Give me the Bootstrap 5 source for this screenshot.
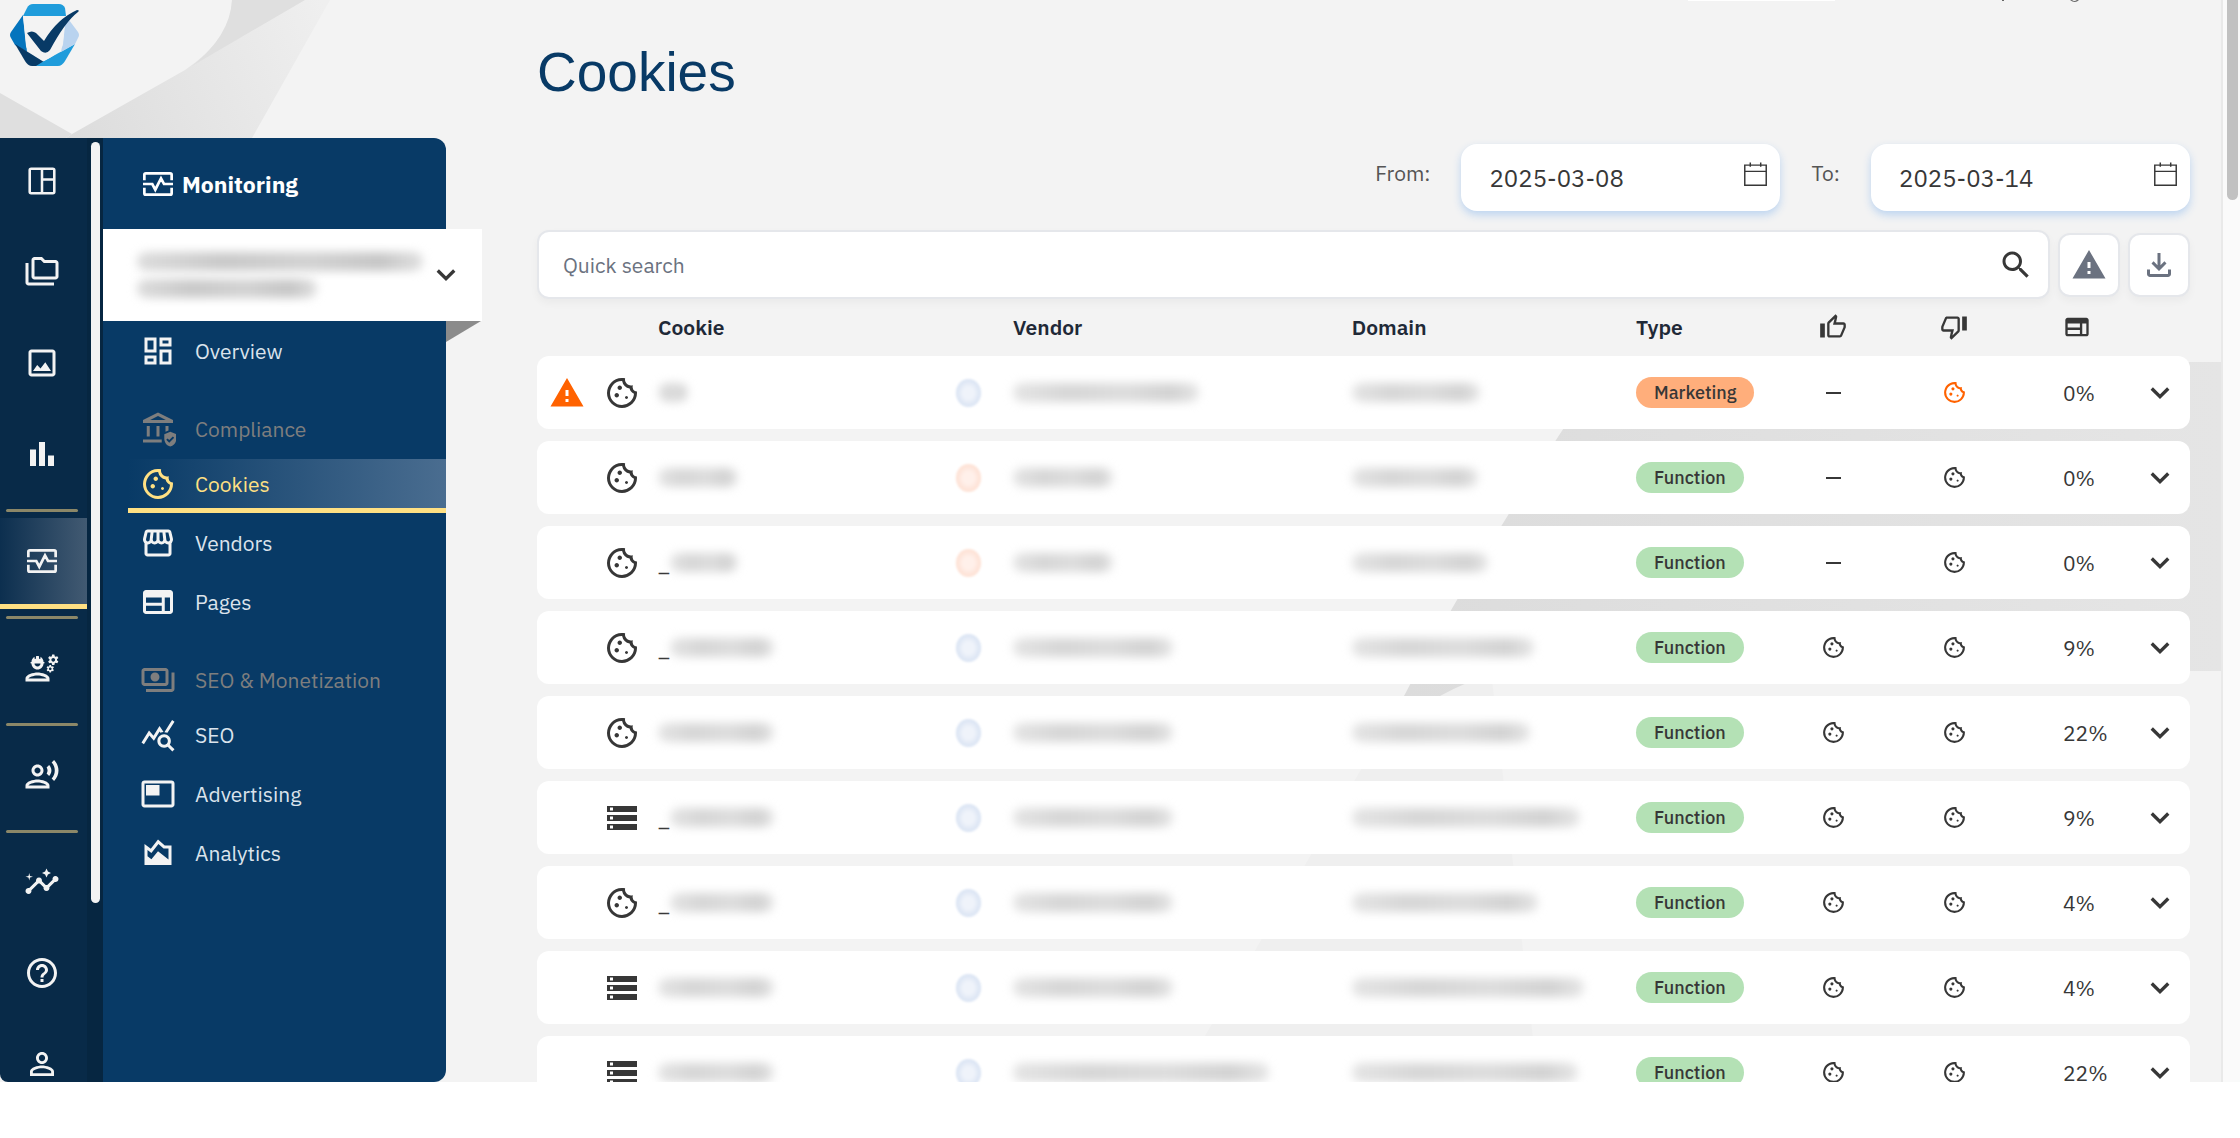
<!DOCTYPE html>
<html lang="en">
<head>
<meta charset="utf-8">
<meta name="viewport" content="width=device-width, initial-scale=1">
<title>Cookies – Monitoring</title>
<link href="https://cdn.jsdelivr.net/npm/bootstrap@5.3.0/dist/css/bootstrap.min.css" rel="stylesheet">
<style>
  :root { --navy:#083a66; --deep:#082a48; --gold:#ffe083; --ink:#373737; --page:#f3f3f3; }
  body { font-family:"IBM Plex Sans","Noto Sans",sans-serif; font-size:21px; line-height:28px; color:var(--ink); background:#fff; }
  svg { display:block; flex:none; fill:currentColor; }
  .i36 { width:36px; height:36px; } .i28 { width:28px; height:28px; } .i25 { width:25px; height:25px; }
  .app { height:calc(100vh - 56px); background:var(--page); overflow:hidden; }
  .backdrop { position:absolute; inset:0; width:100%; height:100%; }
  .side { width:446px; flex:none; }
  .brand { height:138px; padding:3px 8px; flex:none; }
  .side-body { min-height:0; }
  .rail { width:87px; flex:none; background:var(--deep); color:#f3f3f3; border-bottom-left-radius:8px; overflow:hidden; }
  .rail a { height:91px; padding-right:4px; color:inherit; border-bottom:5px solid transparent; flex:none; }
  .rail a.on { background:linear-gradient(90deg,#0c2f4f,#425a72); border-color:var(--gold); }
  .rail hr { margin:7px 9px 6px 6px; border:0; height:3px; background:#8b8768; opacity:1; border-radius:2px; flex:none; }
  .track { width:16px; background:#062641; padding:4px 3px 0 4px; flex:none; }
  .track div { height:81%; background:#f3f3f3; border-radius:5px; }
  .panel { min-width:0; background:var(--navy); color:#dbe3ec; border-radius:0 12px 12px 0; }
  .panel-title { height:91px; padding-left:37px; gap:6px; color:#fff; font-weight:700; font-size:23px; }
  .site-pick { width:379px; height:92px; background:#fff; border:0; padding:0 18px 0 34px; color:var(--ink); }
  .site-pick .smudge { background:linear-gradient(90deg,#dcdcdc,#c9c9c9 30%,#d2d2d2 60%,#c6c6c6 85%,#e0e0e0); }
  .fold { position:absolute; left:343px; top:100%; width:35px; height:21px; background:#8b8b8b; clip-path:polygon(0 0,100% 0,0 100%); }
  .menu { padding:5px 0 0 25px; }
  .menu a, .menu .sect { gap:19px; padding-left:12px; }
  .menu a { height:54px; margin-bottom:5px; border-bottom:5px solid transparent; color:inherit; text-decoration:none; }
  .menu a svg { color:#f3f3f3; }
  .menu a.on { color:var(--gold); border-color:var(--gold); background:linear-gradient(90deg,var(--navy),#4a6d90); }
  .menu a.on svg { color:var(--gold); }
  .menu .sect { height:74px; padding-top:14px; color:#7e7e7e; }
  .main { padding:40px 31px 0 91px; }
  h1 { font:400 55px/64px "Liberation Sans",Arial,sans-serif; color:var(--navy); margin:0 0 40px; }
  .dates { gap:31px; margin-bottom:19px; }
  .dates label { padding-bottom:9px; color:#555; }
  .date-box { width:319px; height:67px; background:#fff; border-radius:16px; box-shadow:0 4px 8px #bcd4f0; padding:0 12px 0 28px; }
  .date-box input { border:0; outline:0; background:none; min-width:0; flex:1; color:var(--ink); font-size:24px; padding:0; }
  .date-box svg { fill:none; stroke:currentColor; margin-bottom:6px; }
  .find { gap:8px; }
  .find-box { height:69px; background:#fff; border:2px solid #e5e7eb; border-radius:12px; box-shadow:0 4px 8px #0000000a; padding:0 14px 0 24px; }
  .find-box input { border:0; outline:0; flex:1; padding:0; }
  .find-box input::placeholder { color:#6b7280; opacity:1; }
  .plain { border:0; background:none; padding:0; color:inherit; }
  .tool { width:62px; height:64px; background:#fff; border:2px solid #e5e7eb; border-radius:12px; color:#6b7280; padding:0; box-shadow:0 4px 8px #0000000a; }
  .grid { width:100%; table-layout:fixed; border-collapse:separate; border-spacing:0 12px; margin-top:-1px; }
  .grid th { height:34px; padding:0 0 0 12px; font-weight:600; color:#1f2937; }
  .grid th svg { color:#373737; }
  .grid td { height:73px; padding:0 0 0 12px; background:#fff; }
  .grid .mid { padding:0; text-align:center; }
  .grid .mid svg { margin:0 auto; }
  .grid .mid .plain { display:block; margin:0 auto; }
  .grid .pct { padding-left:48px; }
  .grid th.pct svg { margin-left:0; }
  .grid td:first-child { border-radius:12px 0 0 12px; } .grid td:last-child { border-radius:0 12px 12px 0; }
  .alert-mark { color:#ff6200; }
  .dash { display:block; width:15px; height:2px; margin:0 auto; background:var(--ink); }
  .kind { display:block; width:max-content; height:31px; line-height:31px; border-radius:16px; padding:0 18px; font-size:18px; font-weight:500; background:#b4e1b5; }
  .kind.mk { background:#ffae7b; }
  .smudge { display:block; height:19px; border-radius:9px; background:linear-gradient(90deg,#e4e4e4,#d6d6d6 30%,#dddddd 60%,#d2d2d2 85%,#e6e6e6); filter:blur(5px); }
  .uline { width:12px; }
  .vlogo { width:25px; height:28px; border-radius:50%; margin:0 auto; filter:blur(1px); background:radial-gradient(#eff3fa 30%,#d3dff1 80%); }
  .vlogo.peach { background:radial-gradient(#fff0ea 30%,#fddccd 80%); }
  .scroll { width:19px; flex:none; background:#fafafa; border-left:2px solid #e9e9e9; padding-left:4px; }
  .scroll div { width:11px; height:200px; background:#c1c1c1; border-radius:0 0 6px 6px; }
</style>
</head>
<body>
<svg width="0" height="0" class="position-absolute" aria-hidden="true">
  <symbol id="cookie" viewBox="0 -960 960 960"><path d="M480-80q-83 0-156-31.500T197-197q-54-54-85.500-127T80-480q0-75 29-147t81-128.500q52-56.500 125-91T475-881q21 0 43 2t45 7q-9 45 6 85t45 66.500q30 26.500 71.500 36.500t85.500-5q-26 59 7.500 113t99.500 56q1 11 1.500 20.500t.5 20.500q0 82-31.500 154.500t-85.500 127q-54 54.500-127 86T480-80Zm-60-480q25 0 42.500-17.500T480-620q0-25-17.500-42.500T420-680q-25 0-42.500 17.500T360-620q0 25 17.500 42.500T420-560Zm-80 200q25 0 42.500-17.500T400-420q0-25-17.500-42.500T340-480q-25 0-42.500 17.500T280-420q0 25 17.500 42.500T340-360Zm260 40q17 0 28.500-11.500T640-360q0-17-11.500-28.500T600-400q-17 0-28.500 11.500T560-360q0 17 11.500 28.500T600-320ZM480-160q122 0 216.500-84T800-458q-50-22-78.500-60T683-603q-77-11-132-66t-68-132q-80-2-140.500 29t-101 79.500Q201-644 180.500-587T160-480q0 133 93.500 226.500T480-160Z"/></symbol>
  <symbol id="board" viewBox="0 0 24 24"><g fill="none" stroke="currentColor" stroke-width="1.700"><rect x="3.800" y="3.800" width="16.400" height="16.400" rx="1"/><path d="M12 4v16M12 11h8"/></g></symbol>
  <symbol id="folders" viewBox="0 0 24 24"><path d="M3 6H1v13c0 1.100.9 2 2 2h17v-2H3V6zM21 4h-7l-2-2H7c-1.100 0-1.990.9-1.990 2L5 15c0 1.100.9 2 2 2h14c1.100 0 2-.9 2-2V6c0-1.100-.9-2-2-2zm0 11H7V4h4.170l2 2H21v9z"/></symbol>
  <symbol id="image" viewBox="0 0 24 24"><path d="M19 5v14H5V5h14m0-2H5c-1.100 0-2 .9-2 2v14c0 1.100.9 2 2 2h14c1.100 0 2-.9 2-2V5c0-1.100-.9-2-2-2zM6 17.300l2.800-4 2.200 2.400 3.200-4.200 3.800 5.800z"/></symbol>
  <symbol id="bars" viewBox="0 0 24 24"><path d="M4 9h4v11H4zM16 13h4v7h-4zM10 4h4v16h-4z"/></symbol>
  <symbol id="pulse" viewBox="0 0 24 24"><path fill="none" stroke="currentColor" stroke-width="1.800" d="M2.900 9.500V5.900q0-1 1-1h16.200q1 0 1 1v3.600M2.900 14.500v3.600q0 1 1 1h16.200q1 0 1-1v-3.600M2 12h6.200l2 3.800 3.800-7.500 2 3.700h6"/></symbol>
  <symbol id="crew" viewBox="0 0 24 24"><path d="M9 15c-2.670 0-8 1.340-8 4v2h16v-2c0-2.660-5.330-4-8-4zm-6 4c.22-.72 3.310-2 6-2 2.700 0 5.800 1.290 6 2H3zM4.740 9H5c0 2.210 1.790 4 4 4s4-1.790 4-4h.26c.27 0 .49-.22.49-.49v-.02c0-.27-.22-.49-.49-.49H13c0-1.480-.81-2.750-2-3.450v.95c0 .28-.22.5-.5.5s-.5-.22-.5-.5V4.140C9.680 4.060 9.350 4 9 4s-.68.06-1 .14V5.500c0 .28-.22.5-.5.5S7 5.780 7 5.500v-.95C5.810 5.250 5 6.520 5 8h-.26c-.27 0-.49.22-.49.49v.03c0 .26.22.48.49.48zM11 9c0 1.100-.9 2-2 2s-2-.9-2-2h4zM21.980 6.230l.93-.83-.75-1.300-1.190.39c-.14-.11-.3-.2-.47-.27L20.250 3h-1.500l-.25 1.220c-.17.07-.33.16-.48.27l-1.180-.39-.75 1.300.93.83c-.02.17-.02.35 0 .52l-.93.85.75 1.300 1.200-.38c.13.1.28.18.43.25l.28 1.230h1.500l.27-1.220c.16-.07.3-.15.44-.25l1.190.38.75-1.300-.93-.85c.03-.19.02-.36.01-.53zM19.500 7.750c-.69 0-1.250-.56-1.250-1.250s.56-1.250 1.250-1.250 1.250.56 1.250 1.250-.56 1.250-1.250 1.250zM19.400 10.790l-.85.28c-.1-.08-.21-.14-.33-.19l-.18-.88h-1.070l-.18.87c-.12.05-.24.12-.34.19l-.84-.28-.54.93.66.59c-.01.13-.01.25 0 .37l-.66.61.54.93.86-.27c.1.07.2.13.31.18l.18.88h1.070l.19-.87c.11-.05.22-.11.32-.18l.85.27.54-.93-.66-.61c.01-.13.01-.25 0-.37l.66-.59-.53-.93zm-1.900 2.600c-.49 0-.89-.4-.89-.89s.4-.89.89-.89.89.4.89.89-.4.89-.89.89z"/></symbol>
  <symbol id="voice" viewBox="0 0 24 24"><path d="M9 13c2.210 0 4-1.790 4-4s-1.790-4-4-4-4 1.790-4 4 1.790 4 4 4zm0-6c1.100 0 2 .9 2 2s-.9 2-2 2-2-.9-2-2 .9-2 2-2zM9 15c-2.670 0-8 1.340-8 4v2h16v-2c0-2.660-5.330-4-8-4zm-6 4c.22-.72 3.310-2 6-2 2.700 0 5.800 1.290 6 2H3zM15.080 7.050c.84 1.180.84 2.710 0 3.890l1.680 1.690c2.020-2.020 2.020-5.070 0-7.270l-1.680 1.690zM20.070 2l-1.630 1.630c2.770 3.020 2.770 7.560 0 10.740L20.070 16c3.900-3.890 3.910-9.950 0-14z"/></symbol>
  <symbol id="insights" viewBox="0 0 24 24"><path d="M21 8c-1.450 0-2.260 1.440-1.930 2.510l-3.550 3.560c-.3-.09-.74-.09-1.040 0l-2.550-2.550C12.270 10.450 11.460 9 10 9c-1.450 0-2.270 1.440-1.930 2.520l-4.560 4.550C2.440 15.740 1 16.550 1 18c0 1.100.9 2 2 2 1.450 0 2.260-1.440 1.930-2.510l4.550-4.560c.3.09.74.09 1.040 0l2.550 2.550C12.730 16.550 13.540 18 15 18c1.450 0 2.270-1.440 1.930-2.520l3.560-3.550c1.070.33 2.510-.48 2.510-1.930 0-1.100-.9-2-2-2zM15 9l.94-2.070L18 6l-2.060-.93L15 3l-.92 2.070L12 6l2.080.93zM3.500 11L4 9l2-.5L4 8l-.5-2L3 8l-2 .5L3 9z"/></symbol>
  <symbol id="help" viewBox="0 0 24 24"><path d="M11 18h2v-2h-2v2zm1-16C6.480 2 2 6.480 2 12s4.480 10 10 10 10-4.480 10-10S17.520 2 12 2zm0 18c-4.410 0-8-3.590-8-8s3.590-8 8-8 8 3.590 8 8-3.590 8-8 8zm0-14c-2.210 0-4 1.790-4 4h2c0-1.100.9-2 2-2s2 .9 2 2c0 2-3 1.750-3 5h2c0-2.250 3-2.500 3-5 0-2.210-1.790-4-4-4z"/></symbol>
  <symbol id="person" viewBox="0 0 24 24"><path d="M12 5.900c1.160 0 2.100.94 2.100 2.100s-.94 2.100-2.100 2.100S9.900 9.160 9.900 8s.94-2.100 2.100-2.100m0 9c2.970 0 6.100 1.460 6.100 2.100v1.100H5.900V17c0-.64 3.130-2.100 6.100-2.100M12 4C9.790 4 8 5.790 8 8s1.790 4 4 4 4-1.790 4-4-1.790-4-4-4zm0 9c-2.670 0-8 1.340-8 4v3h16v-3c0-2.660-5.330-4-8-4z"/></symbol>
  <symbol id="tiles" viewBox="0 0 24 24"><path d="M19 5v2h-4V5h4M9 5v6H5V5h4m10 8v6h-4v-6h4M9 17v2H5v-2h4M21 3h-8v6h8V3zM11 3H3v10h8V3zm10 8h-8v10h8V11zm-10 4H3v6h8v-6z"/></symbol>
  <symbol id="court" viewBox="0 0 24 24" overflow="visible"><path fill-rule="evenodd" d="M12 1L2 6v2h20V6L12 1zM6.800 6L12 3.400 17.200 6H6.800zM4.500 10h2v7h-2zM11 10h2v7h-2zM17 10h2v3l-2 .8zM2 19h12.500v2H2zM20.200 13.800l-4 1.700v3c0 2.400 1.600 4.600 4 5.200 2.400-.6 4-2.800 4-5.200v-3l-4-1.700zm-.7 7.400l-2-2 .9-.9 1.100 1.100 2.400-2.400.9.900-3.300 3.300z"/></symbol>
  <symbol id="shop" viewBox="0 0 24 24"><path d="M21.900 8.890l-1.050-4.370c-.22-.9-1-1.520-1.910-1.520H5.050c-.9 0-1.690.63-1.900 1.520L2.100 8.890c-.24 1.020-.02 2.060.62 2.880.08.11.19.19.28.29V19c0 1.100.9 2 2 2h14c1.100 0 2-.9 2-2v-6.940c.09-.09.2-.18.28-.28.64-.82.87-1.870.62-2.890zm-2.990-3.900l1.050 4.370c.1.42.01.84-.25 1.170-.14.18-.44.47-.94.47-.61 0-1.140-.49-1.210-1.140L16.980 5l1.930-.01zM13 5h1.960l.54 4.520c.05.39-.07.78-.33 1.070-.22.26-.54.41-.95.41-.67 0-1.220-.59-1.220-1.310V5zM8.490 9.520L9.040 5H11v4.690c0 .72-.55 1.310-1.290 1.310-.34 0-.65-.15-.89-.41-.25-.29-.37-.68-.33-1.070zm-4.450-.16L5.050 5h1.970l-.58 4.860c-.08.65-.6 1.140-1.210 1.140-.49 0-.8-.29-.93-.47-.27-.32-.36-.75-.26-1.170zM5 19v-6.030c.08.01.15.03.23.03.87 0 1.660-.36 2.240-.95.6.6 1.400.95 2.310.95.87 0 1.650-.36 2.230-.93.59.57 1.390.93 2.290.93.84 0 1.640-.35 2.240-.95.58.59 1.370.95 2.240.95.08 0 .15-.02.23-.03V19H5z"/></symbol>
  <symbol id="web" viewBox="0 0 24 24"><path fill-rule="evenodd" d="M20 4H4c-1.100 0-2 .9-2 2v12c0 1.100.9 2 2 2h16c1.100 0 2-.9 2-2V6c0-1.100-.9-2-2-2zM4 9h10.500v3.500H4zM4 14.500h10.500V18H4zM16.500 9H20v9h-3.500z"/></symbol>
  <symbol id="cash" viewBox="0 0 24 24"><path d="M19 14V6c0-1.100-.9-2-2-2H3c-1.100 0-2 .9-2 2v8c0 1.100.9 2 2 2h14c1.100 0 2-.9 2-2zm-2 0H3V6h14v8zm-7-7c-1.660 0-3 1.340-3 3s1.340 3 3 3 3-1.340 3-3-1.340-3-3-3zm13 0v11c0 1.100-.9 2-2 2H4v-2h17V7h2z"/></symbol>
  <symbol id="stats" viewBox="0 0 24 24"><path d="M19.880 18.470c.44-.7.7-1.510.7-2.390 0-2.490-2.010-4.500-4.500-4.500s-4.500 2.010-4.500 4.500 2.010 4.500 4.490 4.500c.88 0 1.700-.26 2.390-.7L21.580 23 23 21.580l-3.120-3.110zm-3.800.11c-1.380 0-2.500-1.120-2.500-2.500s1.120-2.500 2.500-2.500 2.500 1.120 2.500 2.500-1.120 2.500-2.500 2.500zM15.720 10.080c-.74.02-1.450.18-2.100.45l-.55-.83-3.800 6.180-3.010-3.520-3.630 5.810L1 17l5-8 3 3.500L13 6l2.720 4.080zM18.310 10.580c-.64-.28-1.330-.45-2.050-.49L21.380 2 23 3.180l-4.690 7.400z"/></symbol>
  <symbol id="advert" viewBox="0 0 24 24"><path d="M21 3H3c-1.110 0-2 .89-2 2v14c0 1.110.89 2 2 2h18c1.110 0 2-.89 2-2V5c0-1.110-.89-2-2-2zm0 16H3V5h18v14zM4 6h9v7H4z"/></symbol>
  <symbol id="area" viewBox="0 0 24 24"><path fill-rule="evenodd" d="M3 6l4.200 3.200L12 3l4.500 4H21v13H3zM5 10v4.200l2.600 2L12 10.800l7 5.500V9h-3.300L12.300 6 7.600 12z"/></symbol>
  <symbol id="warn" viewBox="0 0 24 24"><path d="M1 21h22L12 2 1 21zm12-3h-2v-2h2v2zm0-4h-2v-4h2v4z"/></symbol>
  <symbol id="search" viewBox="0 0 24 24"><path d="M15.500 14h-.79l-.28-.27C15.410 12.590 16 11.110 16 9.500 16 5.910 13.090 3 9.500 3S3 5.910 3 9.500 5.910 16 9.500 16c1.610 0 3.090-.59 4.230-1.570l.27.28v.79l5 4.990L20.490 19l-4.990-5zm-6 0C7.010 14 5 11.990 5 9.500S7.010 5 9.500 5 14 7.010 14 9.500 11.990 14 9.500 14z"/></symbol>
  <symbol id="download" viewBox="0 -960 960 960"><path d="M480-320 280-520l56-58 104 104v-326h80v326l104-104 56 58-200 200ZM240-160q-33 0-56.500-23.500T160-240v-120h80v120h480v-120h80v120q0 33-23.500 56.500T720-160H240Z"/></symbol>
  <symbol id="up" viewBox="0 0 24 24"><path d="M9 21h9c.83 0 1.540-.5 1.840-1.220l3.020-7.050c.09-.23.14-.47.14-.73v-2c0-1.100-.9-2-2-2h-6.310l.95-4.570.03-.32c0-.41-.17-.79-.44-1.060L14.170 1 7.580 7.590C7.220 7.950 7 8.450 7 9v10c0 1.100.9 2 2 2zM9 9l4.340-4.340L12 10h9v2l-3 7H9V9zM1 9h4v12H1V9z"/></symbol>
  <symbol id="down" viewBox="0 0 24 24"><path transform="rotate(180 12 12)" d="M9 21h9c.83 0 1.540-.5 1.840-1.220l3.020-7.050c.09-.23.14-.47.14-.73v-2c0-1.100-.9-2-2-2h-6.310l.95-4.570.03-.32c0-.41-.17-.79-.44-1.060L14.170 1 7.580 7.590C7.220 7.950 7 8.450 7 9v10c0 1.100.9 2 2 2zM9 9l4.340-4.340L12 10h9v2l-3 7H9V9zM1 9h4v12H1V9z"/></symbol>
  <symbol id="store" viewBox="0 0 24 24"><path d="M2 20h20v-4H2v4zm2-3h2v2H4v-2zM2 4v4h20V4H2zm4 3H4V5h2v2zm-4 7h20v-4H2v4zm2-3h2v2H4v-2z"/></symbol>
  <symbol id="chev" viewBox="0 0 24 24"><path fill="none" stroke="currentColor" stroke-width="2.200" d="M6.500 9l5.500 5.500L17.500 9"/></symbol>
  <symbol id="cal" viewBox="0 0 24 24"><path fill="none" stroke="currentColor" stroke-width="1.400" d="M1.700 3h20.600v19.300H1.700zM1.700 9h20.600M7 .5V4.500M17 .5V4.500"/></symbol>
</svg>

<div class="app position-relative d-flex">
  <svg class="backdrop" viewBox="0 0 2240 1082" preserveAspectRatio="none" aria-hidden="true">
    <defs><linearGradient id="g1" x1="70" y1="138" x2="330" y2="20" gradientUnits="userSpaceOnUse"><stop offset="0" stop-color="#dcdcdc"/><stop offset="1" stop-color="#efefef"/></linearGradient>
    <linearGradient id="g2"><stop offset="0" stop-color="#dcdcdc"/><stop offset="1" stop-color="#e5e5e5"/></linearGradient></defs>
    <path fill="url(#g1)" d="M72 134L185 70Q232 38 232 0H330L252 138H66z"/>
    <path fill="#dfdfdf" d="M0 93L72 134L66 138H0zM232 0H305L192 66Q230 36 232 0z"/>
    <path fill="#efefef" d="M1404 696L1491 671L1538 1082H1178z"/>
    <path fill="url(#g2)" d="M1608 362H2221V671H1500Q1465 682 1440 696H1404Q1480 550 1608 362z"/>
    <path fill="#fff" d="M1688 0h147v1h-147z"/>
    <path fill="#666" d="M2002 0h2v1h-2zM2070 0h2q2 2 5 0h2q-4 4-9 0z"/>
  </svg>

  <aside class="side position-relative d-flex flex-column">
    <a class="brand" href="#" aria-label="Home">
      <svg width="72" height="65" viewBox="7 3 72 65">
        <path fill="#1f9cdb" d="M22 16L26 8Q28 4 32 4H58Q62 4 64 8L65 16z"/>
        <path fill="#0474bd" d="M22 15L10 32Q8 35 10 38L14 45L26 52L22 16z"/>
        <path fill="#083a66" d="M14 44L24 61Q27 66 31 66H36L43 62z"/>
        <path fill="#1f9cdb" d="M74 44L64 61Q61 66 57 66H35L43 61z"/>
        <path fill="#b9d3ef" d="M65 16L77 32Q79 35 77 38L74 44L60 52Q64 32 63 20z"/>
        <path fill="#f3f3f3" d="M22 16H65L62 44Q61 52 43 61Q26 52 25 46z"/>
        <path fill="#083a66" d="M26 33Q31 30 35 33L43 41Q56 19 76 10Q79 10 77 12Q64 22 49 50Q45 55 40 51Q29 37 26 33z"/>
      </svg>
    </a>
    <div class="side-body d-flex flex-grow-1">
      <nav class="rail d-flex flex-column" aria-label="Main">
        <a href="#" aria-label="Dashboard" class="d-flex align-items-center justify-content-center"><svg class="i36"><use href="#board"/></svg></a>
        <a href="#" aria-label="Projects" class="d-flex align-items-center justify-content-center"><svg class="i36"><use href="#folders"/></svg></a>
        <a href="#" aria-label="Designs" class="d-flex align-items-center justify-content-center"><svg class="i36"><use href="#image"/></svg></a>
        <a href="#" aria-label="Reports" class="d-flex align-items-center justify-content-center"><svg class="i36"><use href="#bars"/></svg></a>
        <hr>
        <a href="#" aria-label="Monitoring" class="on d-flex align-items-center justify-content-center"><svg class="i36"><use href="#pulse"/></svg></a>
        <hr>
        <a href="#" aria-label="Services" class="d-flex align-items-center justify-content-center"><svg class="i36"><use href="#crew"/></svg></a>
        <hr>
        <a href="#" aria-label="Requests" class="d-flex align-items-center justify-content-center"><svg class="i36"><use href="#voice"/></svg></a>
        <hr>
        <a href="#" aria-label="Insights" class="d-flex align-items-center justify-content-center"><svg class="i36"><use href="#insights"/></svg></a>
        <a href="#" aria-label="Help" class="d-flex align-items-center justify-content-center"><svg class="i36"><use href="#help"/></svg></a>
        <a href="#" aria-label="Account" class="d-flex align-items-center justify-content-center"><svg class="i36"><use href="#person"/></svg></a>
      </nav>
      <div class="track"><div></div></div>
      <div class="panel flex-grow-1 d-flex flex-column">
        <div class="panel-title d-flex align-items-center"><svg class="i36"><use href="#pulse"/></svg>Monitoring</div>
        <div class="position-relative">
          <button type="button" class="site-pick d-flex align-items-center justify-content-between" aria-label="Select site">
            <span class="d-flex flex-column gap-2"><span class="smudge" style="width:286px"></span><span class="smudge" style="width:180px"></span></span>
            <svg class="i36"><use href="#chev"/></svg>
          </button>
          <div class="fold"></div>
        </div>
        <nav class="menu" aria-label="Monitoring">
          <a href="#" class="d-flex align-items-center"><svg class="i36"><use href="#tiles"/></svg>Overview</a>
          <div class="sect d-flex align-items-center"><svg class="i36"><use href="#court"/></svg>Compliance</div>
          <a href="#" class="on d-flex align-items-center"><svg class="i36"><use href="#cookie"/></svg>Cookies</a>
          <a href="#" class="d-flex align-items-center"><svg class="i36"><use href="#shop"/></svg>Vendors</a>
          <a href="#" class="d-flex align-items-center"><svg class="i36"><use href="#web"/></svg>Pages</a>
          <div class="sect d-flex align-items-center"><svg class="i36"><use href="#cash"/></svg>SEO &amp; Monetization</div>
          <a href="#" class="d-flex align-items-center"><svg class="i36"><use href="#stats"/></svg>SEO</a>
          <a href="#" class="d-flex align-items-center"><svg class="i36"><use href="#advert"/></svg>Advertising</a>
          <a href="#" class="d-flex align-items-center"><svg class="i36"><use href="#area"/></svg>Analytics</a>
        </nav>
      </div>
    </div>
  </aside>

  <main class="main position-relative flex-grow-1">
    <h1>Cookies</h1>
    <div class="dates d-flex align-items-center justify-content-end">
      <label for="from">From:</label>
      <div class="date-box d-flex align-items-center"><input id="from" type="text" value="2025-03-08"><svg class="i25"><use href="#cal"/></svg></div>
      <label for="to">To:</label>
      <div class="date-box d-flex align-items-center"><input id="to" type="text" value="2025-03-14"><svg class="i25"><use href="#cal"/></svg></div>
    </div>
    <div class="find d-flex align-items-center">
      <div class="find-box d-flex align-items-center flex-grow-1"><input type="search" placeholder="Quick search" aria-label="Quick search"><button type="button" class="plain" aria-label="Search"><svg class="i36"><use href="#search"/></svg></button></div>
      <button type="button" class="tool d-flex align-items-center justify-content-center" aria-label="Show warnings"><svg class="i36"><use href="#warn"/></svg></button>
      <button type="button" class="tool d-flex align-items-center justify-content-center" aria-label="Download"><svg class="i36"><use href="#download"/></svg></button>
    </div>
    <table class="grid">
      <colgroup><col style="width:60px"><col style="width:49px"><col style="width:17.6%"><col style="width:64px"><col><col style="width:17.2%"><col style="width:149px"><col style="width:120px"><col style="width:122px"><col style="width:114px"><col style="width:61px"></colgroup>
      <thead><tr><th></th><th></th><th>Cookie</th><th></th><th>Vendor</th><th>Domain</th><th>Type</th>
        <th class="mid"><svg class="i28"><use href="#up"/></svg></th><th class="mid"><svg class="i28"><use href="#down"/></svg></th><th class="pct"><svg class="i28"><use href="#web"/></svg></th><th></th></tr></thead>
      <tbody id="rows"></tbody>
    </table>
  </main>
  <div class="scroll position-relative"><div></div></div>
</div>

<script src="https://cdn.jsdelivr.net/npm/bootstrap@5.3.0/dist/js/bootstrap.bundle.min.js"></script>
<script>
  // icon, underscore shown, widths of the hidden name / vendor / domain, logo tint, type, set on accept, share of pages
  const rows = [
    ['cookie', 0,  30, 186, 128, '',      'Marketing', 0, '0%'],
    ['cookie', 0,  80, 100, 126, 'peach', 'Function',  0, '0%'],
    ['cookie', 1,  68, 100, 136, 'peach', 'Function',  0, '0%'],
    ['cookie', 1, 104, 160, 182, '',      'Function',  1, '9%'],
    ['cookie', 0, 116, 160, 178, '',      'Function',  1, '22%'],
    ['store',  1, 104, 160, 228, '',      'Function',  1, '9%'],
    ['cookie', 1, 104, 160, 186, '',      'Function',  1, '4%'],
    ['store',  0, 116, 160, 232, '',      'Function',  1, '4%'],
    ['store',  0, 116, 256, 226, '',      'Function',  1, '22%']
  ];
  const icon = (id, size, more = '') => `<svg class="${size} ${more}"><use href="#${id}"/></svg>`;
  const hidden = w => `<span class="smudge" style="width:${w}px"></span>`;
  document.getElementById('rows').innerHTML = rows.map(([ic, us, a, b, c, tint, type, ok, pct]) => {
    const hot = type === 'Marketing';
    return `<tr><td class="mid">${hot ? icon('warn', 'i36', 'alert-mark') : ''}</td><td class="mid">${icon(ic, 'i36')}</td>
      <td><div class="d-flex align-items-center">${us ? '<span class="uline">_</span>' : ''}${hidden(a)}</div></td>
      <td class="mid"><div class="vlogo ${tint}"></div></td><td>${hidden(b)}</td><td>${hidden(c)}</td>
      <td><span class="kind ${hot ? 'mk' : ''}">${type}</span></td>
      <td class="mid">${ok ? icon('cookie', 'i25') : '<span class="dash"></span>'}</td>
      <td class="mid">${icon('cookie', 'i25', hot ? 'alert-mark' : '')}</td><td class="pct">${pct}</td>
      <td class="mid"><button type="button" class="plain" aria-label="Show details">${icon('chev', 'i36')}</button></td></tr>`;
  }).join('');
</script>
</body>
</html>
